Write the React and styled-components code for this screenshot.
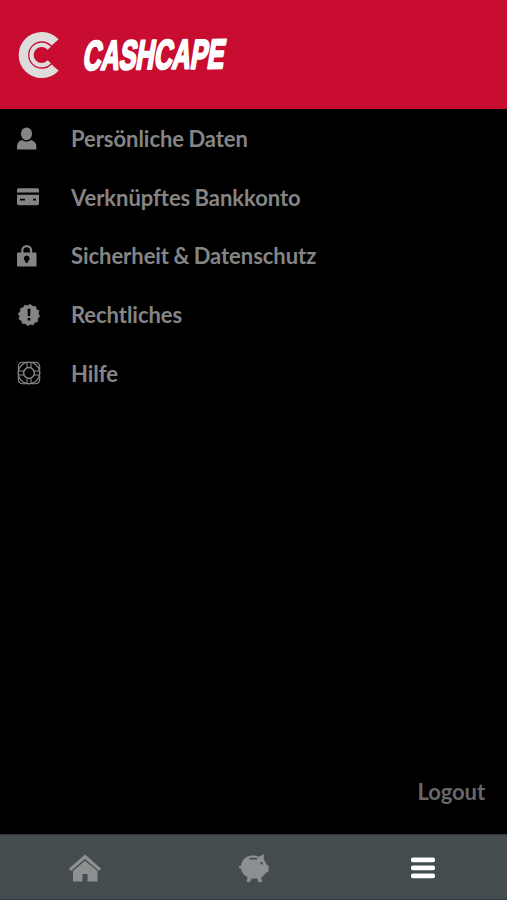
import styled, { createGlobalStyle, ThemeProvider } from 'styled-components';

const theme = {
    color: {
        brand: '#c90d30',
        background: '#000000',
        label: '#858585',
        logout: '#686868',
        tabBar: '#444c4f',
        tabIcon: '#8c9090',
        logo: '#dedcdc',
        white: '#ffffff',
    },
};

const GlobalStyle = createGlobalStyle`
    body {
        margin: 0;
        background: #000;
        font-family: Lato, 'Liberation Sans', sans-serif;
    }
`;

const Screen = styled.div`
    display: flex;
    flex-direction: column;
    height: 100vh;
    overflow: hidden;
    background: ${props => props.theme.color.background};
`;

const Header = styled.header`
    box-sizing: border-box;
    flex: none;
    display: flex;
    align-items: center;
    gap: 20px;
    height: 109px;
    padding: 1px 18px 0;
    background: ${props => props.theme.color.brand};
`;

const Menu = styled.ul`
    flex: 1;
    list-style: none;
    margin: 0;
    padding: 0;
`;

const MenuItem = styled.li`
    box-sizing: border-box;
    display: flex;
    align-items: center;
    height: 58.6px;
    padding: 1px 0 0 16px;
    color: ${props => props.theme.color.label};
`;

const MenuIcon = styled.svg`
    flex: none;
    width: 26px;
    height: 26px;
    margin-right: 29px;
    fill: currentColor;
`;

const MenuLabel = styled.span`
    padding-top: 1px;
    font-size: 22px;
    line-height: 28px;
    font-weight: 700;
    letter-spacing: -0.05px;
    word-spacing: -0.9px;
    font-variant-ligatures: none;
    white-space: nowrap;
`;

const LogoutRow = styled.div`
    display: flex;
    justify-content: flex-end;
    padding: 0 22px 28px 0;
`;

const LogoutButton = styled.button`
    border: 0;
    padding: 0;
    background: none;
    color: ${props => props.theme.color.logout};
    font: 700 22px/28px Lato, sans-serif;
    letter-spacing: -0.1px;
`;

const TabBar = styled.nav`
    box-sizing: border-box;
    flex: none;
    display: grid;
    grid-template-columns: repeat(3, 1fr);
    height: 66px;
    border-top: 1px solid #303638;
    border-bottom: 1px solid #383c42;
    background: ${props => props.theme.color.tabBar};
`;

const Tab = styled.a`
    display: flex;
    align-items: center;
    justify-content: center;
    padding-top: 2px;
    color: ${props => (props.$active ? props.theme.color.white : props.theme.color.tabIcon)};

    svg {
        fill: currentColor;
    }
`;

const LogoMark = styled.svg`
    flex: none;
    fill: none;
    stroke: ${props => props.theme.color.logo};
`;

const Wordmark = styled.svg`
    flex: none;
    overflow: visible;
    fill: ${props => props.theme.color.white};
    stroke: ${props => props.theme.color.white};

    text {
        font-family: 'Liberation Sans Narrow', 'Liberation Sans', sans-serif;
        font-size: 41px;
        font-weight: 700;
    }
`;

const UserIcon = () => (
    <MenuIcon viewBox="0 0 26 26">
        <ellipse cx="10.5" cy="7.8" rx="5.6" ry="6.4" />
        <path d="M1 23.5v-3.2c0-3.5 2-5.4 5.3-6.3 2.5 2.1 5.9 2.1 8.4 0 3.3.9 5.6 2.8 5.6 6.3v3.2z" />
    </MenuIcon>
);

const CardIcon = () => (
    <MenuIcon viewBox="0 0 26 26">
        <path d="M1 8.5V6q0-1.7 1.7-1.7h18.6Q23 4.3 23 6v2.5z" />
        <path
            fillRule="evenodd"
            d="M1 10.7h22v8.8q0 1.7-1.7 1.7H2.7Q1 21.2 1 19.5zM4 14.8v1.8h5v-1.8zM17 14.8v1.8h3v-1.8z"
        />
    </MenuIcon>
);

const LockIcon = () => (
    <MenuIcon viewBox="0 0 26 26">
        <path d="M6.3 11V7.5a4.4 4.4 0 0 1 8.8 0V11" fill="none" stroke="currentColor" strokeWidth="2.2" />
        <path
            fillRule="evenodd"
            d="M2 9.5h17.5q1 0 1 1v12q0 1-1 1H2q-1 0-1-1v-12q0-1 1-1zm8.7 3a2.9 2.9 0 0 0-1.7 5.2l.8 2.4h1.8l.8-2.4a2.9 2.9 0 0 0-1.700-5.200z"
        />
    </MenuIcon>
);

const badgePoints = Array.from({ length: 24 }, (_, index) => {
    const radius = index % 2 ? 9.4 : 10.8;
    const angle = ((index + 0.5) * Math.PI) / 12;
    return `${13 + radius * Math.cos(angle)},${13 + radius * Math.sin(angle)}`;
}).join(' ');

const LegalIcon = () => (
    <MenuIcon viewBox="0 0 26 26">
        <polygon points={badgePoints} stroke="currentColor" strokeWidth="0.6" strokeLinejoin="round" />
        <path d="M11.5 6.8h3l-.4 7.400h-2.200zM11.700 16h2.600v2.500h-2.600z" fill="#000" />
    </MenuIcon>
);

const HelpIcon = () => (
    <MenuIcon viewBox="0 0 26 26">
        <g fill="none" stroke="currentColor" strokeWidth="1.1">
            <circle cx="13" cy="13" r="10.8" strokeWidth="1.3" />
            <circle cx="13" cy="13" r="5.4" strokeWidth="1.5" />
            <path d="M10 2.300H7Q2.300 2.300 2.300 7v3M16 2.300h3q4.700 0 4.700 4.700v3M10 23.700H7q-4.700 0-4.700-4.700v-3M16 23.700h3q4.700 0 4.700-4.700v-3" />
            <path d="M11 2.500v5.500M15 2.500v5.500M11 18v5.500M15 18v5.500M2.500 11H8M2.500 15H8M18 11h5.500M18 15h5.500" />
        </g>
    </MenuIcon>
);

const HomeIcon = () => (
    <svg width="32" height="28" viewBox="0 0 32 28">
        <path d="M16 .5 32 14.500l-2 2.400L16 5 2 16.900 0 14.500z" />
        <path d="M16 6.700 4 17V27.500h9.500v-7.600h5v7.600h10V17z" />
    </svg>
);

const PiggyIcon = () => (
    <svg width="30" height="30" viewBox="0 0 30 30">
        <path
            fillRule="evenodd"
            d="M0 14q0-1.200 1-1.200h1C3 6.500 7.500 2.500 13.500 2.500c2.500 0 4.700.5 6.500 1.300L24.800 1v5.800c1.100 1.200 2 2.800 2.500 4.700l2.200.8v6.500l-2.700 1c-1.200 2-2.500 3.400-4.700 4.600l1 4.600h-3.800l-1.100-3.400h-5.700L11 29H7.500l1-4.800c-3.700-1.700-5.800-4.500-6.500-8.600C.8 15.700 0 15.100 0 14zM10.500 6.500h7.800V4.800h-7.800zM22.500 9a1.300 1.300 0 1 0 .1 2.600 1.300 1.300 0 0 0-.1-2.600z"
        />
    </svg>
);

const BarsIcon = () => (
    <svg width="24" height="22" viewBox="0 0 24 22">
        <rect y="0.5" width="24" height="4.7" rx="1.8" />
        <rect y="8.5" width="24" height="4.7" rx="1.8" />
        <rect y="16.5" width="24" height="4.7" rx="1.8" />
    </svg>
);

const MENU_ITEMS = [
    { label: 'Persönliche Daten', icon: UserIcon },
    { label: 'Verknüpftes Bankkonto', icon: CardIcon },
    { label: 'Sicherheit & Datenschutz', icon: LockIcon },
    { label: 'Rechtliches', icon: LegalIcon },
    { label: 'Hilfe', icon: HelpIcon },
];

const TABS = [
    { name: 'home', icon: HomeIcon },
    { name: 'savings', icon: PiggyIcon },
    { name: 'menu', icon: BarsIcon, active: true },
];

const Logo = () => (
    <>
        <LogoMark width="44" height="48" viewBox="0 0 44 48">
            <path d="M37.2 11.4A18.4 18.4 0 1 0 37.2 36.6" strokeWidth="9.400" />
            <path d="M31.3 17.200A10.200 10.200 0 1 0 31.300 30.800" strokeWidth="4.300" />
        </LogoMark>
        <Wordmark width="146" height="34" viewBox="0 0 146 34">
            <text
                transform="translate(0 31.7) rotate(-0.7) skewX(-10)"
                textLength="141"
                lengthAdjust="spacingAndGlyphs"
                strokeWidth="2.5"
                strokeLinejoin="round"
            >
                CASHCAPE
            </text>
        </Wordmark>
    </>
);

const App = () => {
    const renderMenuItem = ({ label, icon: Icon }) => (
        <MenuItem key={label}>
            <Icon />
            <MenuLabel>{label}</MenuLabel>
        </MenuItem>
    );

    const renderTab = ({ name, icon: Icon, active }) => (
        <Tab key={name} $active={active}>
            <Icon />
        </Tab>
    );

    return (
        <ThemeProvider theme={theme}>
            <GlobalStyle />
            <Screen>
                <Header>
                    <Logo />
                </Header>
                <Menu>{MENU_ITEMS.map(renderMenuItem)}</Menu>
                <LogoutRow>
                    <LogoutButton>Logout</LogoutButton>
                </LogoutRow>
                <TabBar>{TABS.map(renderTab)}</TabBar>
            </Screen>
        </ThemeProvider>
    );
};

export default App;
